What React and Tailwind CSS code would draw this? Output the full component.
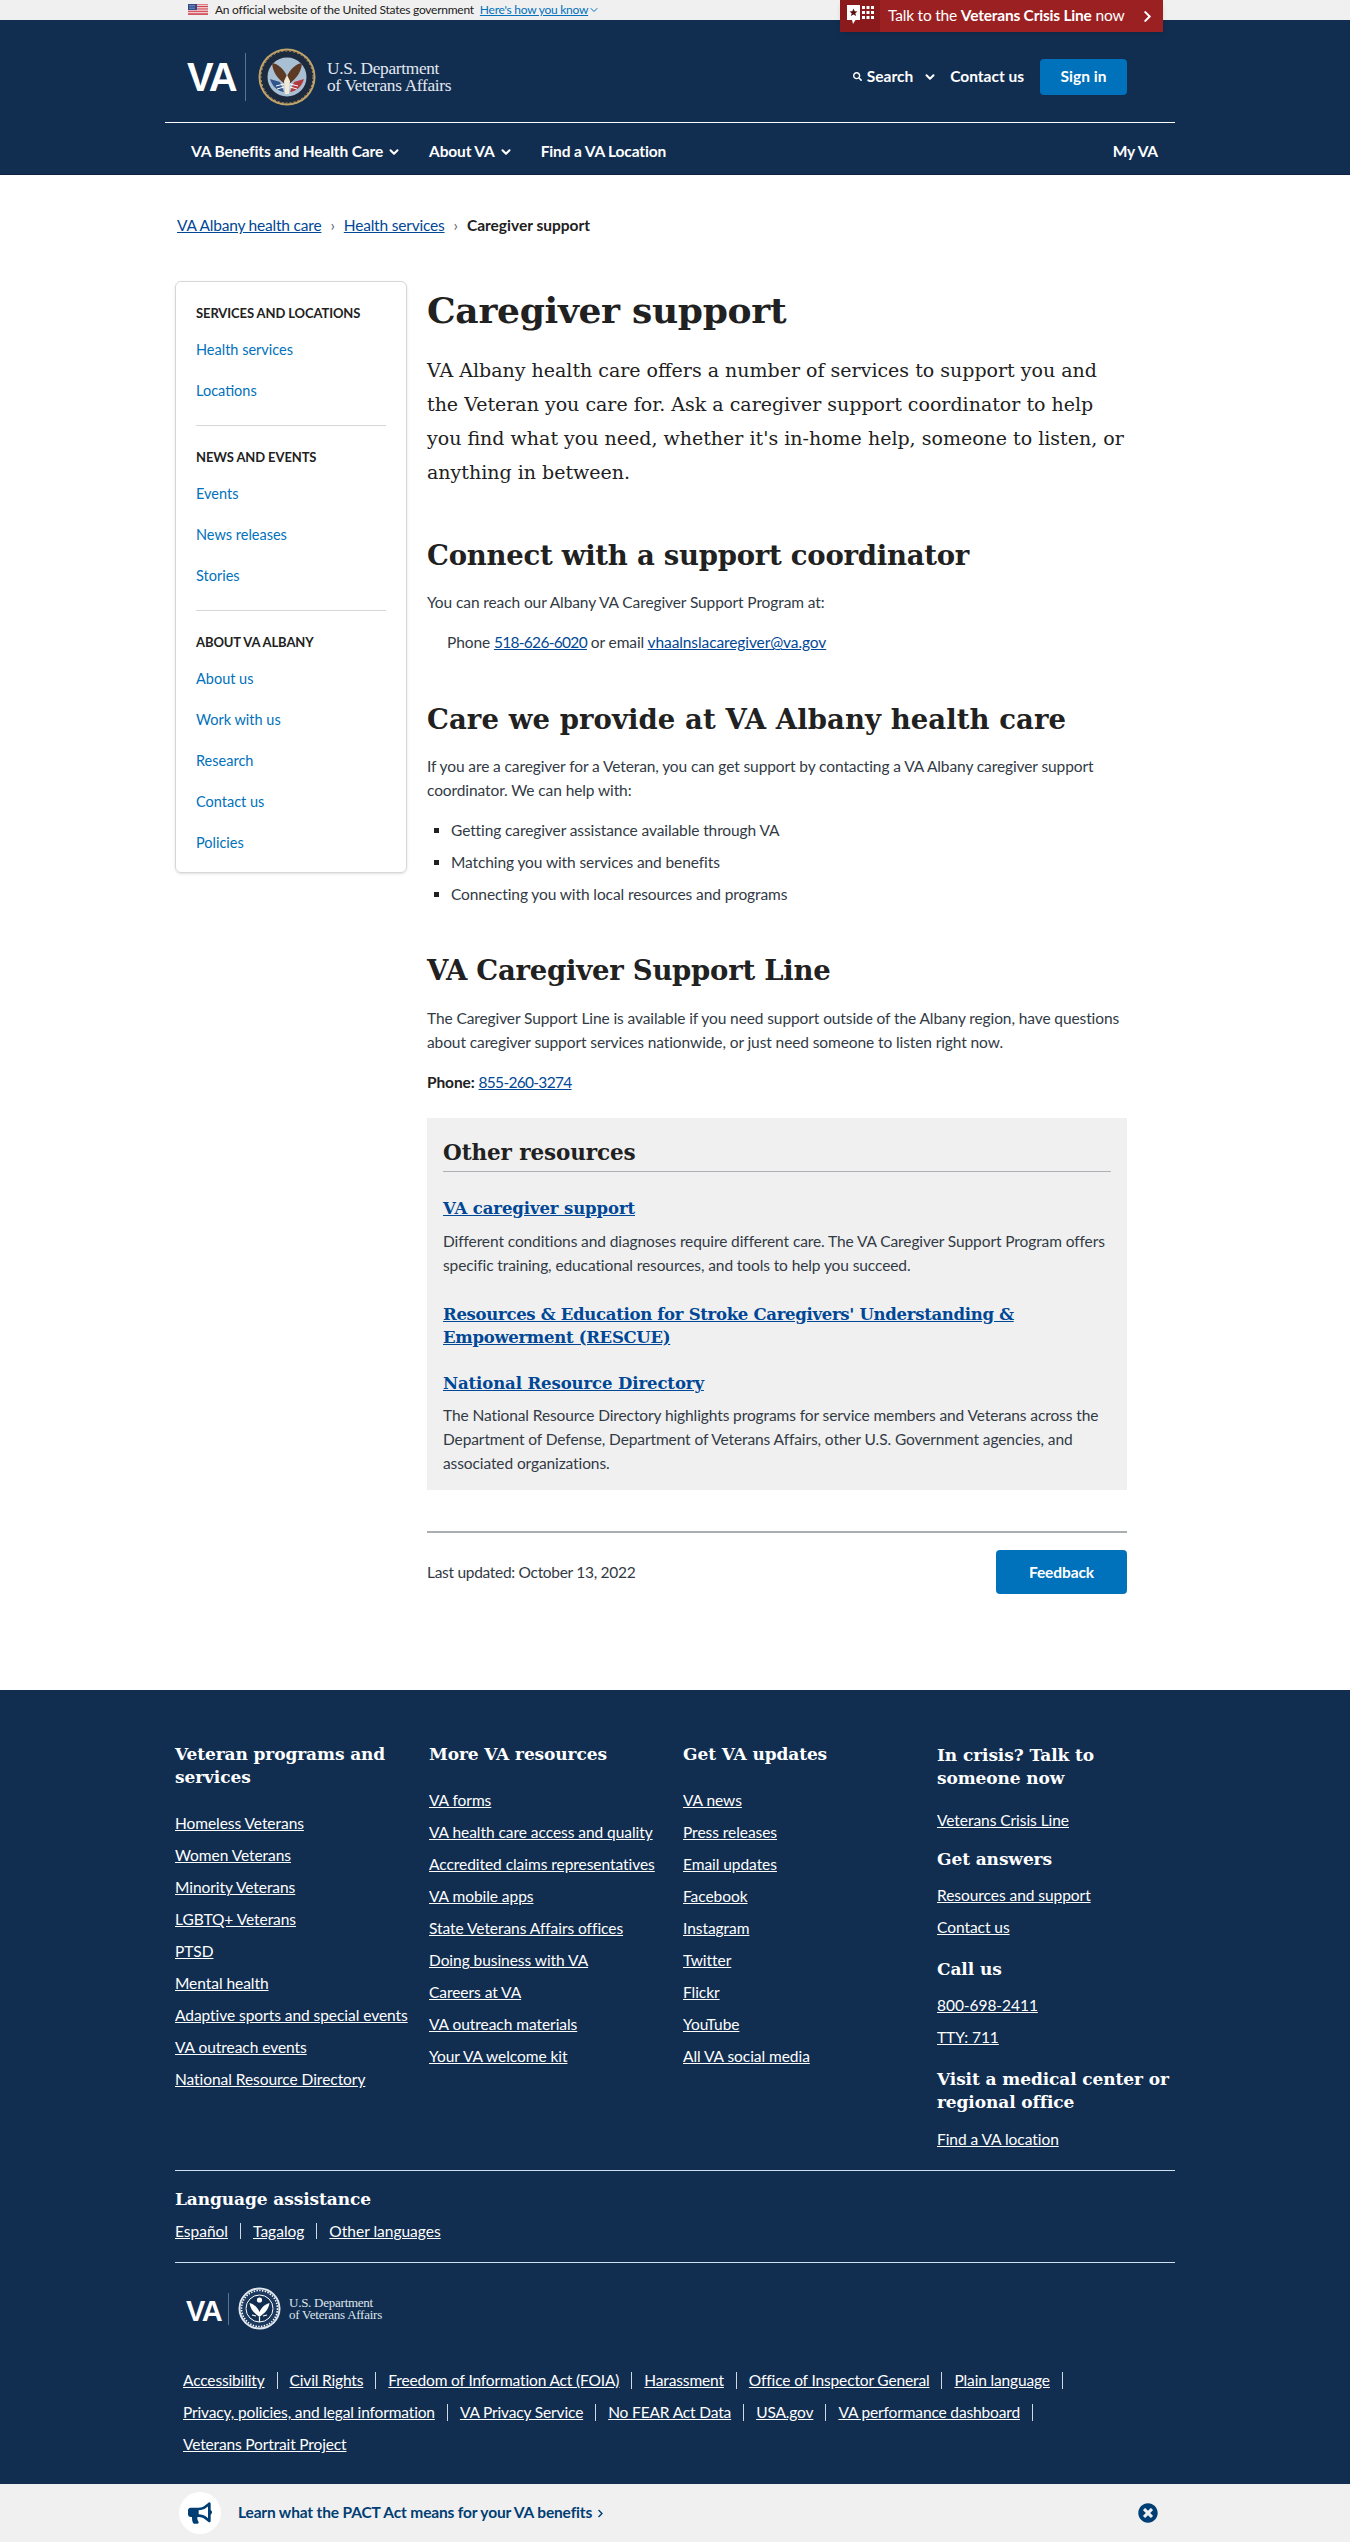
import React from "react";
import { FaBullhorn, FaChevronRight, FaTimesCircle, FaSearch } from "react-icons/fa";
import { ChevronDown } from "lucide-react";

const serif = "[font-family:'DejaVu_Serif',serif] font-bold";
const bodyLink = "text-[#004795] underline";
const phoneLink = "text-[#004795] underline tracking-[-0.7px]";
const footLink = "text-white underline";

const Flag = () => (
  <svg width="20" height="11" viewBox="0 0 20 11" className="shrink-0">
    <rect width="20" height="11" fill="#fff" />
    <path d="M0 0.8h20M0 2.5h20M0 4.2h20M0 5.9h20M0 7.6h20M0 9.3h20M0 10.6h20" stroke="#c8313e" strokeWidth="0.9" />
    <rect width="9" height="6" fill="#2f4a8c" />
    <path d="M1.5 1.5h6M1.5 3h6M1.5 4.5h6" stroke="#cfd6ea" strokeWidth="0.7" strokeDasharray="1 1" />
  </svg>
);

const CrisisIcon = () => (
  <svg width="29" height="24" viewBox="0 0 29 24">
    <path d="M1 1h13v15H9.5L7 20l-1-4H1z" fill="#fff" />
    <path d="M7.5 4.5l1.2 2.7 2.8.2-2.2 1.8.8 2.8-2.6-1.6-2.6 1.6.8-2.8-2.2-1.8 2.8-.2z" fill="#5a1011" />
    <g fill="#fff">
      <rect x="16" y="2" width="3" height="3" /><rect x="20.5" y="2" width="3" height="3" /><rect x="25" y="2" width="3" height="3" />
      <rect x="16" y="7" width="3" height="3" /><rect x="20.5" y="7" width="3" height="3" /><rect x="25" y="7" width="3" height="3" />
      <rect x="16" y="12" width="3" height="3" /><rect x="20.5" y="12" width="3" height="3" /><rect x="25" y="12" width="3" height="3" />
    </g>
  </svg>
);

const ColorSeal = () => (
  <svg width="58" height="58" viewBox="0 0 58 58" className="shrink-0">
    <circle cx="29" cy="29" r="28.5" fill="#c2a468" />
    <circle cx="29" cy="29" r="26.5" fill="#1b2a3f" />
    <circle cx="29" cy="29" r="26" fill="none" stroke="#b99a63" strokeWidth="1" strokeDasharray="2 2" />
    <circle cx="29" cy="29" r="19.5" fill="#a9c0d4" />
    <path d="M29 38C22 32 15 27 14 15c6 1 11 5 15 13 4-8 9-12 15-13-1 12-8 17-15 23z" fill="#5d3a24" />
    <path d="M12 31l10 3 4 10c-7-1-12-6-14-13z" fill="#31558a" />
    <path d="M46 31l-10 3-4 10c7-1 12-6 14-13z" fill="#b23a3e" />
    <path d="M26 33l3-6 3 6-1 13h-4z" fill="#f2ead9" />
    <path d="M18 38l8-2M40 38l-8-2M19 41l7-2M39 41l-7-2" stroke="#fff" strokeWidth="1" />
  </svg>
);

const WhiteSeal = () => (
  <svg width="43" height="43" viewBox="0 0 43 43" className="shrink-0">
    <circle cx="21.5" cy="21.5" r="21" fill="#dfe5ec" />
    <circle cx="21.5" cy="21.5" r="19" fill="#1c3a5f" />
    <circle cx="21.5" cy="21.5" r="18" fill="none" stroke="#fff" strokeWidth="1.6" strokeDasharray="1.4 1.4" />
    <circle cx="21.5" cy="21.5" r="13.5" fill="#112e51" stroke="#fff" strokeWidth="1" />
    <path d="M21.5 30c-5-4-9-7-10-14 4 1 8 4 10 9 2-5 6-8 10-9-1 7-5 10-10 14z" fill="#fff" />
    <circle cx="21.5" cy="13" r="2.6" fill="#fff" />
    <path d="M14 28l4 1M29 28l-4 1M21.5 30v5" stroke="#fff" strokeWidth="1.2" />
  </svg>
);

const Caret = () => <ChevronDown size={14} strokeWidth={3.5} className="text-white shrink-0" />;

const GovBanner = () => (
  <div className="relative h-5 bg-[#f0f0f0]">
    <div className="ml-[165px] w-[1010px] flex items-center h-[19px] pl-[23px] text-[12px] leading-[19px] text-[#212121]">
      <Flag />
      <span className="ml-[7px] tracking-[-0.25px]">An official website of the United States government</span>
      <a className="ml-[6px] text-[#0071bb] underline tracking-[-0.25px]">Here's how you know</a>
      <ChevronDown size={12} className="text-[#0071bb]" />
    </div>
    <a className="absolute left-[840px] top-0 z-10 w-[323px] h-8 flex items-center bg-[#9b2022] text-white shadow-md">
      <span className="w-10 h-8 flex items-center justify-center bg-[#8a1a1c]"><CrisisIcon /></span>
      <span className="ml-2 text-[15.5px] tracking-[-0.2px]">Talk to the <b>Veterans Crisis Line</b> now</span>
      <FaChevronRight size={13} className="ml-auto mr-[9px]" />
    </a>
  </div>
);

const Header = () => (
  <header className="bg-[#112e51] h-[155px] text-white border-b border-[#0b2340]">
    <div className="ml-[165px] w-[1010px]">
      <div className="h-[103px] border-b border-white flex items-center pl-[22px] pr-[48px] pt-[11px]">
        <span className="w-[58px] text-[40px] leading-none font-bold tracking-[-2px] [font-family:'Liberation_Sans',sans-serif]">VA</span>
        <span className="w-px h-[48px] bg-[#5b7391]"></span>
        <span className="ml-[12px]"><ColorSeal /></span>
        <span className="ml-[11px] text-[17.3px] leading-[17px] tracking-[-0.3px] text-[#e3e8ef] [font-family:'Liberation_Serif',serif]">
          U.S. Department<br />of Veterans Affairs
        </span>
        <span className="ml-auto flex items-center text-[15.5px] font-bold">
          <FaSearch size={9} />
          <span className="ml-[5px]">Search</span>
          <span className="ml-[10px]"><Caret /></span>
          <span className="ml-[13px]">Contact us</span>
          <a className="ml-4 w-[87px] h-9 rounded bg-[#0071bb] flex items-center justify-center">Sign in</a>
        </span>
      </div>
      <nav className="h-[51px] flex items-center pl-[26px] pr-[17px] pt-[6px] text-[15.5px] font-bold tracking-[-0.15px]">
        <span>VA Benefits and Health Care</span>
        <span className="ml-[4px]"><Caret /></span>
        <span className="ml-[28px]">About VA</span>
        <span className="ml-[4px]"><Caret /></span>
        <span className="ml-[28px]">Find a VA Location</span>
        <span className="ml-auto">My VA</span>
      </nav>
    </div>
  </header>
);

const Crumbs = () => (
  <div className="pt-[38px] h-[62px] text-[15.5px] leading-6 text-[#212121] flex pl-[2px]">
    <a className={`${bodyLink} tracking-[-0.2px]`}>VA Albany health care</a>
    <span className="mx-[9px] text-[#5b616b]">›</span>
    <a className={`${bodyLink} tracking-[-0.2px]`}>Health services</a>
    <span className="mx-[9px] text-[#5b616b]">›</span>
    <b>Caregiver support</b>
  </div>
);

const sideGroups = [
  ["SERVICES AND LOCATIONS", ["Health services", "Locations"]],
  ["NEWS AND EVENTS", ["Events", "News releases", "Stories"]],
  ["ABOUT VA ALBANY", ["About us", "Work with us", "Research", "Contact us", "Policies"]],
];

const Sidebar = () => (
  <aside className="w-[232px] h-[592px] shrink-0 mt-[44px] border border-[#d6d7d9] rounded-md shadow-sm px-[20px] pt-[19px]">
    {sideGroups.map(([title, items], i) => (
      <div key={title} className={i > 0 ? "mt-[14px] border-t border-[#d6d7d9] pt-[19px]" : ""}>
        <div className="text-[13px] leading-6 font-bold text-[#212121] tracking-[-0.1px]">{title}</div>
        <ul className="mt-1">
          {items.map((item) => (
            <li key={item} className="h-[41px] flex items-center text-[14.5px] text-[#0071bb]">{item}</li>
          ))}
        </ul>
      </div>
    ))}
  </aside>
);

const Content = () => (
  <article className="w-[700px] ml-[20px] mt-[49px] text-[15.5px] leading-6 tracking-[-0.1px] text-[#323a45]">
    <h1 className={`${serif} text-[36px] leading-[48px] text-[#212121] tracking-[-0.3px]`}>Caregiver support</h1>
    <p className="mt-[19px] text-[19px] leading-[34px] text-[#212121] tracking-normal [font-family:'DejaVu_Serif',serif]">
      VA Albany health care offers a number of services to support you and<br />
      the Veteran you care for. Ask a caregiver support coordinator to help<br />
      you find what you need, whether it's in-home help, someone to listen, or<br />
      anything in between.
    </p>
    <h2 className={`${serif} mt-[46px] text-[27.5px] leading-10 text-[#212121] tracking-[-0.25px]`}>Connect with a support coordinator</h2>
    <p className="mt-[15px]">You can reach our Albany VA Caregiver Support Program at:</p>
    <p className="mt-4 pl-5">
      Phone <a className={phoneLink}>518-626-6020</a> or email <a className={bodyLink}>vhaalnslacaregiver@va.gov</a>
    </p>
    <h2 className={`${serif} mt-[45px] text-[27.5px] leading-10 text-[#212121] tracking-[0.08px]`}>Care we provide at VA Albany health care</h2>
    <p className="mt-[15px]">
      If you are a caregiver for a Veteran, you can get support by contacting a VA Albany caregiver support<br />
      coordinator. We can help with:
    </p>
    <ul className="mt-4 ml-6 list-[square] space-y-2 marker:text-[#212121]">
      <li>Getting caregiver assistance available through VA</li>
      <li>Matching you with services and benefits</li>
      <li>Connecting you with local resources and programs</li>
    </ul>
    <h2 className={`${serif} mt-[44px] text-[27.5px] leading-10 text-[#212121] tracking-[-0.25px]`}>VA Caregiver Support Line</h2>
    <p className="mt-4">
      The Caregiver Support Line is available if you need support outside of the Albany region, have questions<br />
      about caregiver support services nationwide, or just need someone to listen right now.
    </p>
    <p className="mt-4"><b className="text-[#212121]">Phone:</b> <a className={phoneLink}>855-260-3274</a></p>

    <section className="mt-6 bg-[#f0f0f0] px-4 pt-[19px] pb-[15px]">
      <h3 className={`${serif} text-[21.5px] leading-8 text-[#212121] pb-[2px] border-b border-[#aeb0b5]`}>Other resources</h3>
      <h4 className={`${serif} mt-[25px] text-[16.5px] leading-6 ${bodyLink}`}>VA caregiver support</h4>
      <p className="mt-2">
        Different conditions and diagnoses require different care. The VA Caregiver Support Program offers<br />
        specific training, educational resources, and tools to help you succeed.
      </p>
      <h4 className={`${serif} mt-[27px] text-[16.5px] leading-[22.5px] tracking-[-0.3px] ${bodyLink}`}>
        Resources &amp; Education for Stroke Caregivers' Understanding &amp;<br />Empowerment (RESCUE)
      </h4>
      <h4 className={`${serif} mt-[23px] text-[16.5px] leading-6 ${bodyLink}`}>National Resource Directory</h4>
      <p className="mt-[7px]">
        The National Resource Directory highlights programs for service members and Veterans across the<br />
        Department of Defense, Department of Veterans Affairs, other U.S. Government agencies, and<br />
        associated organizations.
      </p>
    </section>

    <div className="mt-[41px] border-t-2 border-[#a9aeb1] pt-[17px] pb-[96px] flex items-start justify-between">
      <span className="mt-[10px] tracking-[-0.3px]">Last updated: October 13, 2022</span>
      <a className="w-[131px] h-11 rounded bg-[#0071bb] text-white font-bold flex items-center justify-center">Feedback</a>
    </div>
  </article>
);

const footCols = [
  ["Veteran programs and services", ["Homeless Veterans", "Women Veterans", "Minority Veterans", "LGBTQ+ Veterans", "PTSD", "Mental health", "Adaptive sports and special events", "VA outreach events", "National Resource Directory"]],
  ["More VA resources", ["VA forms", "VA health care access and quality", "Accredited claims representatives", "VA mobile apps", "State Veterans Affairs offices", "Doing business with VA", "Careers at VA", "VA outreach materials", "Your VA welcome kit"]],
  ["Get VA updates", ["VA news", "Press releases", "Email updates", "Facebook", "Instagram", "Twitter", "Flickr", "YouTube", "All VA social media"]],
];

const footRows = [
  ["Accessibility", "Civil Rights", "Freedom of Information Act (FOIA)", "Harassment", "Office of Inspector General", "Plain language"],
  ["Privacy, policies, and legal information", "VA Privacy Service", "No FEAR Act Data", "USA.gov", "VA performance dashboard"],
  ["Veterans Portrait Project"],
];

const FootHead = ({ className = "", children }) => (
  <h3 className={`${serif} text-[17px] leading-[23px] text-white tracking-[-0.1px] whitespace-nowrap ${className}`}>{children}</h3>
);

const Footer = () => (
  <footer className="bg-[#112e51] text-white text-[15.5px] leading-6 tracking-[-0.05px] h-[794px] pt-[52px]">
    <div className="mx-auto w-[1000px]">
      <div className="grid grid-cols-[254px_254px_254px_238px] h-[407px]">
        {footCols.map(([title, links], i) => (
          <div key={title} className="pt-px">
            <FootHead>{i === 0 ? <>Veteran programs and<br />services</> : title}</FootHead>
            <ul className="mt-[22px] space-y-2">
              {links.map((l) => <li key={l}><a className={footLink}>{l}</a></li>)}
            </ul>
          </div>
        ))}
        <div className="pt-[2px]">
          <FootHead>In crisis? Talk to<br />someone now</FootHead>
          <p className="mt-[18px]"><a className={footLink}>Veterans Crisis Line</a></p>
          <FootHead className="mt-4">Get answers</FootHead>
          <p className="mt-3"><a className={footLink}>Resources and support</a></p>
          <p className="mt-2"><a className={footLink}>Contact us</a></p>
          <FootHead className="mt-[19px]">Call us</FootHead>
          <p className="mt-3"><a className={footLink}>800-698-2411</a></p>
          <p className="mt-2"><a className={footLink}>TTY: 711</a></p>
          <FootHead className="mt-[19px]">Visit a medical center or<br />regional office</FootHead>
          <p className="mt-[13px]"><a className={footLink}>Find a VA location</a></p>
        </div>
      </div>
      <div className="mt-[21px] border-t border-[#cfe0f0] pt-4 tracking-normal">
        <div className={`${serif} text-[17px] leading-6 tracking-[-0.1px]`}>Language assistance</div>
        <div className="mt-2 flex items-center">
          <a className={footLink}>Español</a>
          <span className="mx-[12px] w-px h-4 bg-[#cfd8e3]"></span>
          <a className={footLink}>Tagalog</a>
          <span className="mx-[12px] w-px h-4 bg-[#cfd8e3]"></span>
          <a className={footLink}>Other languages</a>
        </div>
      </div>
      <div className="mt-[19px] border-t border-[#cfe0f0] pt-[25px] pl-[11px] h-[75px] flex items-start">
        <span className="mt-[3px] w-[42px] text-[29px] leading-[40px] font-bold tracking-[-1.5px] [font-family:'Liberation_Sans',sans-serif]">VA</span>
        <span className="mt-[5px] w-px h-[32px] bg-[#5b7391]"></span>
        <span className="ml-[9px] -mt-px"><WhiteSeal /></span>
        <span className="ml-[8px] mt-[9px] text-[13px] leading-[12px] tracking-[-0.25px] text-[#dfe5ec] [font-family:'Liberation_Serif',serif]">
          U.S. Department<br />of Veterans Affairs
        </span>
      </div>
      <div className="mt-[31px] pl-2 space-y-2 tracking-[-0.15px]">
        {footRows.map((row, r) => (
          <div key={r} className="flex items-center">
            {row.map((item) => (
              <React.Fragment key={item}>
                <a className={footLink}>{item}</a>
                {r < 2 && <span className="mx-[12px] w-px h-[17px] bg-[#cfd8e3]"></span>}
              </React.Fragment>
            ))}
          </div>
        ))}
      </div>
    </div>
  </footer>
);

const PactBar = () => (
  <div className="h-[58px] bg-[#f0f0f0] flex items-center pl-[179px] pr-[192px]">
    <span className="w-[42px] h-[42px] rounded-full bg-white flex items-center justify-center text-[#003e73]">
      <FaBullhorn size={24} />
    </span>
    <a className="ml-[17px] flex items-center text-[15.5px] font-bold tracking-[-0.15px] text-[#003e73]">
      Learn what the PACT Act means for your VA benefits
      <FaChevronRight size={9} className="ml-[4px]" />
    </a>
    <FaTimesCircle size={20} className="ml-auto text-[#003e73]" />
  </div>
);

export default function App() {
  return (
    <div className="w-[1350px] h-[2542px] overflow-hidden bg-white [font-family:Lato,sans-serif]">
      <GovBanner />
      <Header />
      <main className="mx-auto w-[1000px]">
        <Crumbs />
        <div className="flex items-start">
          <Sidebar />
          <Content />
        </div>
      </main>
      <Footer />
      <PactBar />
    </div>
  );
}
